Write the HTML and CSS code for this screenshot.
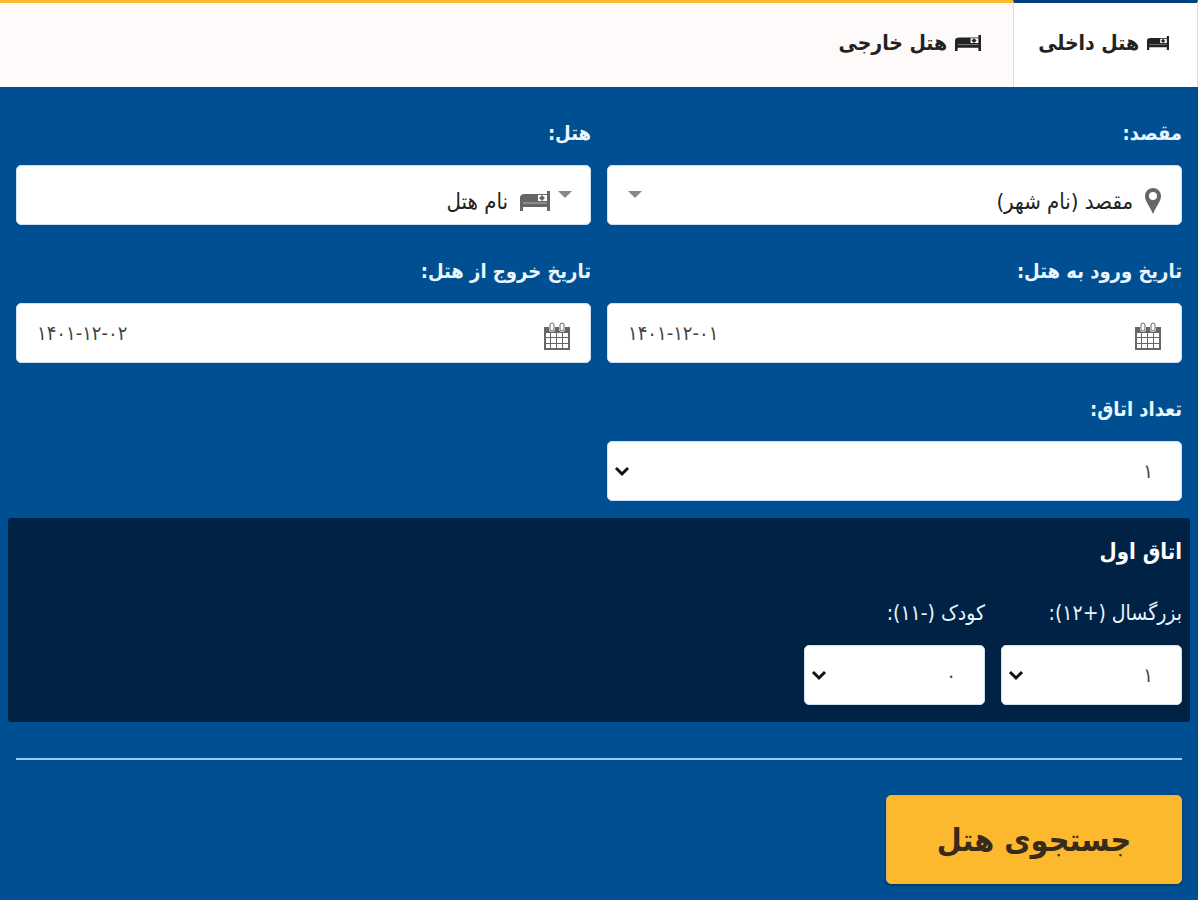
FILE: index.html
```
<!DOCTYPE html>
<html lang="fa" dir="rtl">
<head>
    <meta charset="UTF-8">
    <meta name="viewport" content="width=device-width, initial-scale=1.0">
    <title>رزرو هتل</title>
    <link rel="stylesheet" href="styles.css">
</head>
<body>

<!-- icons used more than once -->
<svg class="sprite" aria-hidden="true">
    <symbol id="bed" viewBox="0 0 30 20" preserveAspectRatio="none">
        <path d="M27 0h3v20h-3v-4H3v4H0V7c0-3 2-4 5-4h22zM18 4v6h9V4z" fill-rule="evenodd"/>
        <path d="M22 4l3 3-3 3-3-3z"/>
        <path d="M3 12h24" stroke="#fff" stroke-opacity=".5"/>
    </symbol>
    <symbol id="calendar" viewBox="0 0 26 28">
        <path fill-rule="evenodd" d="M0 5h5v2a3 3 0 0 0 6 0V5h4v2a3 3 0 0 0 6 0V5h5v23H0zM2 11v4h4v-4zM7 11v4h5v-4zM13 11v4h5v-4zM19 11v4h5v-4zM2 16v5h4v-5zM7 16v5h5v-5zM13 16v5h5v-5zM19 16v5h5v-5zM2 22v4h4v-4zM7 22v4h5v-4zM13 22v4h5v-4zM19 22v4h5v-4z"/>
        <rect x="6" y="1" width="4" height="8" rx="2" fill="none" stroke="currentColor"/>
        <rect x="16" y="1" width="4" height="8" rx="2" fill="none" stroke="currentColor"/>
    </symbol>
</svg>

<div class="search">
    <nav class="tabs">
        <a href="#" class="tab active"><svg class="tab-icon"><use href="#bed"/></svg>هتل داخلی</a>
        <a href="#" class="tab"><svg class="tab-icon wide"><use href="#bed"/></svg>هتل خارجی</a>
    </nav>

    <form class="panel">
        <div class="fields">
            <div class="field">
                <label for="city">مقصد:</label>
                <div class="box low">
                    <svg class="pin" viewBox="0 0 16 26"><path fill-rule="evenodd" d="M8 0a8 8 0 0 1 8 8c0 5-4 9-8 18C4 17 0 13 0 8a8 8 0 0 1 8-8zm0 4a4 4 0 1 0 0 8 4 4 0 0 0 0-8z"/></svg>
                    <select id="city"><option>مقصد (نام شهر)</option></select>
                    <span class="caret"></span>
                </div>
            </div>
            <div class="field">
                <label for="hotel">هتل:</label>
                <div class="box low">
                    <span class="caret"></span>
                    <svg class="bed"><use href="#bed"/></svg>
                    <select id="hotel"><option>نام هتل</option></select>
                </div>
            </div>
            <div class="field">
                <label for="checkin">تاریخ ورود به هتل:</label>
                <div class="box">
                    <svg class="calendar"><use href="#calendar"/></svg>
                    <input type="text" id="checkin" dir="ltr" value="۱۴۰۱-۱۲-۰۱">
                </div>
            </div>
            <div class="field">
                <label for="checkout">تاریخ خروج از هتل:</label>
                <div class="box">
                    <svg class="calendar"><use href="#calendar"/></svg>
                    <input type="text" id="checkout" dir="ltr" value="۱۴۰۱-۱۲-۰۲">
                </div>
            </div>
            <div class="field">
                <label for="rooms">تعداد اتاق:</label>
                <div class="box count">
                    <select id="rooms"><option>۱</option><option>۲</option><option>۳</option></select>
                    <svg class="chevron" viewBox="0 0 16 12"><path d="M2 3l6 6 6-6"/></svg>
                </div>
            </div>
        </div>

        <div class="room">
            <h2>اتاق اول</h2>
            <div class="guests">
                <div class="field">
                    <label for="adults">بزرگسال (+۱۲):</label>
                    <div class="box count">
                        <select id="adults"><option>۱</option><option>۲</option></select>
                        <svg class="chevron" viewBox="0 0 16 12"><path d="M2 3l6 6 6-6"/></svg>
                    </div>
                </div>
                <div class="field">
                    <label for="children">کودک (-۱۱):</label>
                    <div class="box count">
                        <select id="children"><option>۰</option><option>۱</option></select>
                        <svg class="chevron" viewBox="0 0 16 12"><path d="M2 3l6 6 6-6"/></svg>
                    </div>
                </div>
            </div>
        </div>

        <hr>
        <button type="submit">جستجوی هتل</button>
    </form>
</div>

</body>
</html>
```
FILE: styles.css
```
* {
    box-sizing: border-box;
}
body {
    margin: 0;
    background-color: white;
    font-family: "DejaVu Sans Condensed", "DejaVu Sans", sans-serif;
    font-size: 22px;
    color: #222;
}
.sprite {
    position: absolute;
    width: 0;
    height: 0;
}
svg {
    flex: none;
    fill: currentColor;
}
.search {
    display: flex;
    flex-direction: column;
    min-height: 100vh;
    margin-right: 2px;
}
.tabs {
    display: flex;
    height: 87px;
    background-color: #fffafa;
    border-top: 3px solid #fdb92e;
}
.tab {
    display: flex;
    align-items: center;
    gap: 8px;
    padding: 0 32px 4px;
    color: #222;
    font-size: 21px;
    font-weight: bold;
    text-decoration: none;
}
.tab.active {
    margin-top: -3px;
    padding: 0 28px 4px 24px;
    background-color: white;
    border-top: 3px solid #00407f;
    border-left: 1px solid #ddd;
    border-right: 1px solid #ddd;
}
.tab-icon {
    width: 22px;
    height: 14px;
}
.tab-icon.wide {
    width: 26px;
    height: 16px;
}
.panel {
    flex: 1;
    padding: 30px 16px 16px;
    background-color: #004f92;
}
.fields {
    display: grid;
    grid-template-columns: 1fr 1fr;
    gap: 30px 16px;
}
label {
    display: block;
    height: 32px;
    margin-bottom: 16px;
    line-height: 32px;
    font-size: 20px;
    font-weight: bold;
    color: #eaf6ff;
}
.box {
    display: flex;
    align-items: center;
    height: 60px;
    padding: 0 20px;
    background-color: white;
    border: 1px solid #cfe2f5;
    border-radius: 5px;
    color: #666;
}
.box.low {
    padding-top: 12px;
}
.box.count {
    padding: 0 28px 0 6px;
}
select, input {
    flex: 1;
    min-width: 0;
    height: 40px;
    padding: 0;
    background: transparent;
    border: 0;
    font: inherit;
    color: #222;
    appearance: none;
}
.low select {
    margin: 0 12px;
}
input, .count select {
    font-size: 20px;
    color: #444;
}
.caret {
    margin-bottom: 14px;
    border: 7px solid transparent;
    border-top-color: #888;
    border-bottom: 0;
}
.low .caret:first-child {
    margin-right: -2px;
    margin-left: 8px;
}
.pin {
    width: 16px;
    height: 26px;
}
.bed {
    width: 30px;
    height: 20px;
}
.calendar {
    width: 26px;
    height: 28px;
    margin-top: 6px;
}
.chevron {
    width: 16px;
    height: 12px;
    fill: none;
    stroke: #111;
    stroke-width: 3;
}
.room {
    margin: 17px -8px 0;
    padding: 16px 8px 17px;
    background-color: #002345;
    border-radius: 3px;
}
h2 {
    margin: 0 0 27px;
    font-size: 22px;
    line-height: 36px;
    color: white;
}
.room label {
    font-size: 21px;
    font-weight: normal;
}
.guests {
    display: grid;
    grid-template-columns: repeat(6, 1fr);
    gap: 16px;
}
hr {
    margin: 36px 0 35px;
    border: 0;
    border-top: 2px solid #a9c8e6;
}
button {
    display: block;
    width: 296px;
    height: 89px;
    background-color: #fdb92e;
    border: 1px solid #d9b866;
    border-radius: 5px;
    box-shadow: 0 1px 3px #002f5c;
    font: inherit;
    font-size: 32px;
    font-weight: bold;
    color: #3a2a1a;
    cursor: pointer;
}
```
